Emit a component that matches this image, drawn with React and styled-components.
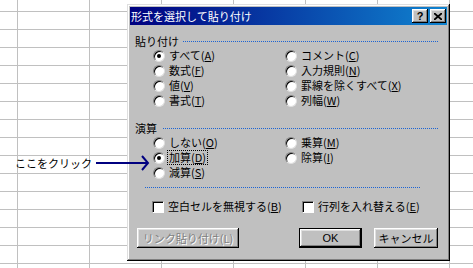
import styled, { createGlobalStyle } from "styled-components";

const Global = createGlobalStyle`
  html, body {
    margin: 0;
    padding: 0;
  }
  body {
    width: 473px;
    height: 268px;
    overflow: hidden;
    background-color: #fff;
    background-image:
      linear-gradient(to right, #c0c0c0 1px, transparent 1px),
      linear-gradient(to bottom, #c0c0c0 1px, transparent 1px);
    background-size: 72px 18px;
    background-position: 17px 11px;
    font-family: "Noto Sans CJK JP", "Noto Sans", sans-serif;
    font-size: 11px;
    color: #000;
  }
`;

const Sheet = styled.div`
  position: relative;
  width: 473px;
  height: 268px;
`;

const Callout = styled.div`
  position: absolute;
  z-index: 2;
  left: 15px;
  top: 156px;
  height: 14px;
  display: flex;
  align-items: center;
  gap: 4px;
  line-height: 14px;
  white-space: nowrap;
`;

const Dialog = styled.div`
  position: absolute;
  z-index: 1;
  left: 127px;
  top: 4px;
  width: 323px;
  height: 257px;
  box-sizing: border-box;
  padding: 3px;
  background: #c0c0c0;
  box-shadow: inset -1px -1px #000, inset 1px 1px #dfdfdf,
    inset -2px -2px #808080, inset 2px 2px #fff;
  display: flex;
  flex-direction: column;
`;

const TitleBar = styled.div`
  height: 18px;
  display: flex;
  align-items: center;
  justify-content: space-between;
  padding: 0 1px 0 1px;
  background: linear-gradient(to right, #000080, #1084d0);
  color: #fff;
  line-height: 18px;
`;

const TitleButtons = styled.div`
  display: flex;
  gap: 2px;
`;

const TitleButton = styled.div`
  width: 16px;
  height: 14px;
  box-sizing: border-box;
  display: flex;
  align-items: center;
  justify-content: center;
  background: #c0c0c0;
  color: #000;
  font-family: "Liberation Sans", sans-serif;
  font-weight: bold;
  font-size: 11px;
  box-shadow: inset -1px -1px #000, inset 1px 1px #fff,
    inset -2px -2px #808080, inset 2px 2px #dfdfdf;
`;

const Heading = styled.div`
  display: flex;
  align-items: center;
  gap: ${(p) => p.$gap}px;
  height: 14px;
  margin: ${(p) => p.$top}px 9px 0 5px;
  line-height: 14px;
`;

const Rule = styled.div`
  flex: 1;
  border-top: 1px dotted #1c64d4;
`;

const OptionGrid = styled.div`
  display: grid;
  grid-template-columns: ${(p) => p.$col}px auto;
  grid-auto-rows: ${(p) => p.$row}px;
  padding-left: ${(p) => p.$left}px;
  margin-top: ${(p) => p.$top || 0}px;
`;

const Option = styled.div`
  display: flex;
  align-items: center;
  white-space: nowrap;
  line-height: 13px;
`;

const Radio = styled.span`
  position: relative;
  width: 12px;
  height: 12px;
  margin-right: 3px;
  box-sizing: border-box;
  border-radius: 50%;
  background: #fff;
  border: 1px solid;
  border-color: #808080 #dfdfdf #dfdfdf #808080;
  box-shadow: inset 1px 1px #000;
  flex: none;

  &::after {
    content: "";
    display: ${(p) => (p.$checked ? "block" : "none")};
    position: absolute;
    left: 3px;
    top: 3px;
    width: 4px;
    height: 4px;
    border-radius: 50%;
    background: #000;
  }
`;

const Check = styled.span`
  width: 12px;
  height: 12px;
  margin-right: 4px;
  box-sizing: border-box;
  background: #fff;
  border: 1px solid;
  border-color: #808080 #fff #fff #808080;
  box-shadow: inset 1px 1px #000;
  flex: none;
`;

const Label = styled.span`
  padding: 0 1px;
  outline: ${(p) => (p.$focus ? "1px dotted #000" : "none")};
`;

const Separator = styled.div`
  margin: 7px 0 0 15px;
  width: 275px;
  border-top: 1px dotted #1c64d4;
`;

const Buttons = styled.div`
  display: flex;
  gap: 12px;
  margin-top: 15px;
  padding: 0 9px 0 7px;
`;

const Button = styled.div`
  width: ${(p) => p.$w}px;
  height: 20px;
  box-sizing: border-box;
  display: flex;
  align-items: center;
  justify-content: center;
  background: #c0c0c0;
  white-space: nowrap;
  color: ${(p) => (p.$disabled ? "#808080" : "#000")};
  text-shadow: ${(p) => (p.$disabled ? "1px 1px #fff" : "none")};
  border: ${(p) => (p.$default ? "1px solid #000" : "none")};
  margin-left: ${(p) => (p.$push ? "auto" : "0")};
  box-shadow: inset -1px -1px #000, inset 1px 1px #fff,
    inset -2px -2px #808080, inset 2px 2px #dfdfdf;
  font-family: ${(p) =>
    p.$latin ? '"Liberation Sans", sans-serif' : "inherit"};
`;

function Opt({ text, k, checked, focus }) {
  return (
    <Option>
      <Radio $checked={checked} />
      <Label $focus={focus}>
        {text}(<u>{k}</u>)
      </Label>
    </Option>
  );
}

export default function App() {
  return (
    <Sheet>
      <Global />
      <Dialog>
        <TitleBar>
          <span>形式を選択して貼り付け</span>
          <TitleButtons>
            <TitleButton>?</TitleButton>
            <TitleButton>
              <svg width="8" height="7" viewBox="0 0 8 7">
                <path d="M0 0 L8 7 M8 0 L0 7" stroke="#000" strokeWidth="1.8" />
              </svg>
            </TitleButton>
          </TitleButtons>
        </TitleBar>

        <Heading $top={9} $gap={4}>
          <span>貼り付け</span>
          <Rule />
        </Heading>
        <OptionGrid $col={132} $row={15} $left={23}>
          <Opt text="すべて" k="A" checked />
          <Opt text="コメント" k="C" />
          <Opt text="数式" k="F" />
          <Opt text="入力規則" k="N" />
          <Opt text="値" k="V" />
          <Opt text="罫線を除くすべて" k="X" />
          <Opt text="書式" k="T" />
          <Opt text="列幅" k="W" />
        </OptionGrid>

        <Heading $top={13} $gap={6}>
          <span>演算</span>
          <Rule />
        </Heading>
        <OptionGrid $col={132} $row={15} $left={23}>
          <Opt text="しない" k="O" />
          <Opt text="乗算" k="M" />
          <Opt text="加算" k="D" checked focus />
          <Opt text="除算" k="I" />
          <Opt text="減算" k="S" />
        </OptionGrid>

        <Separator />

        <OptionGrid $col={150} $row={13} $left={22} $top={12}>
          <Option>
            <Check />
            <span>
              空白セルを無視する(<u>B</u>)
            </span>
          </Option>
          <Option>
            <Check />
            <span>
              行列を入れ替える(<u>E</u>)
            </span>
          </Option>
        </OptionGrid>

        <Buttons>
          <Button $w={102} $disabled>
            リンク貼り付け(L)
          </Button>
          <Button $w={63} $default $push $latin>
            OK
          </Button>
          <Button $w={64}>キャンセル</Button>
        </Buttons>
      </Dialog>
      <Callout>
        <span>ここをクリック</span>
        <svg width="56" height="16" viewBox="0 0 56 16">
          <line x1="0" y1="8" x2="52" y2="8" stroke="#000080" strokeWidth="2" />
          <polyline
            points="46,1 52,8 46,15"
            fill="none"
            stroke="#000080"
            strokeWidth="2"
          />
        </svg>
      </Callout>
    </Sheet>
  );
}
